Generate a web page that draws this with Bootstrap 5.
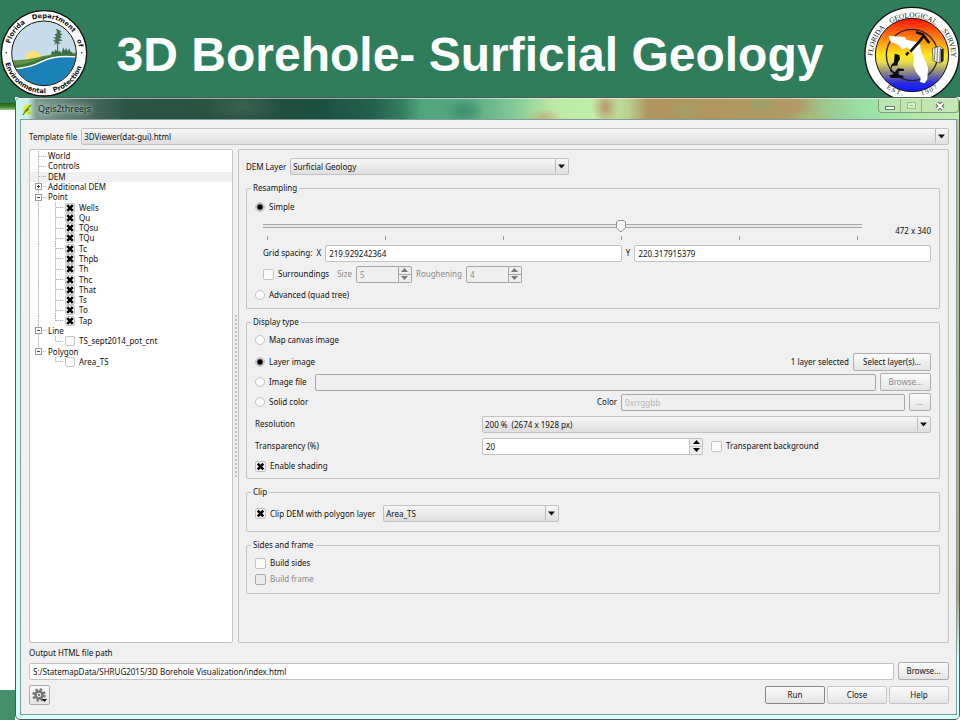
<!DOCTYPE html>
<html lang="en">
<head>
<meta charset="utf-8">
<meta name="viewport" content="width=device-width, initial-scale=1">
<title>3D Borehole- Surficial Geology</title>
<link href="https://cdn.jsdelivr.net/npm/bootstrap@5.3.0/dist/css/bootstrap.min.css" rel="stylesheet">
<style>
  :root {
    --slide-green: #2f7d5b;
    --face: #f0f0f0;
    --line: #c2c2c2;
    --arrow: url("data:image/svg+xml,%3Csvg xmlns='http://www.w3.org/2000/svg' width='13' height='14'%3E%3Cpath d='M.5 0v14' stroke='%23bbb'/%3E%3Cpath d='M3 5.5h7L6.500 9.500z' fill='%23111'/%3E%3C/svg%3E");
    --cross: url("data:image/svg+xml,%3Csvg xmlns='http://www.w3.org/2000/svg' viewBox='0 0 10 10'%3E%3Cpath d='M2.500 2.400L7.500 7.600M7.500 2.400L2.500 7.600' stroke='%23000' stroke-width='2.300'/%3E%3C/svg%3E");
  }
  body { font: 8px/12px "Noto Sans", "Open Sans", sans-serif; color: #111; background: #fff; }
  .slide-head { background: var(--slide-green); }
  .slide-head h1 { font: bold 48px/56px "Liberation Sans", Arial, sans-serif; color: #fff; padding: 27px 12px 0 0; }
  .slide-head svg { display: block; flex: none; }

  .edge { width: 15px; }
  .edge-top { height: 6px; background: var(--slide-green); }
  .edge-bar { height: 7px; background: linear-gradient(#2c5a1a, #3f8f27 60%, #a9c9a0); }
  .edge-foot { height: 30px; background: #458e6c; }

  .win { border: 1px solid #4b5a58; border-radius: 5px; background: linear-gradient(#d2f5f0, #d8ffff); min-width: 0; overflow: hidden; }
  .win-title {
    height: 21px; border-top: 1px solid #ffffff88;
    background:
      radial-gradient(ellipse 40px 18px at 24% 8px, #4f6f6388, transparent),
      radial-gradient(ellipse 20px 12px at 47.500% 12px, #3a8c6d, transparent),
      radial-gradient(ellipse 18px 8px at 56% 18px, #c3b184, transparent),
      radial-gradient(ellipse 14px 18px at 62.500% 8px, #b8996a, transparent),
      radial-gradient(ellipse 16px 10px at 71% 12px, #a3a06c, transparent),
      radial-gradient(ellipse 16px 8px at 79% 5px, #93a46c, transparent),
      radial-gradient(ellipse 20px 9px at 84% 18px, #a6ba7c, transparent),
      linear-gradient(90deg, #cff5ee 0, #c7eee4 12px, #7c9c90 20px, #4a6b5e 70px, #2d5546 110px, #29503f 24%, #1c5041 32%, #24614e 38%, #337f61 41%, #50a67c 43%, #56a880 48%, #86cb96 53%, #bdeaa6 57%, #c2eeac 62%, #b9cf90 65%, #b1945f 67%, #b0975f 75%, #b09a68 83%, #9cc78e 85.500%, #9ae0a6 90%, #b5e8ab 96%, #c3eab5);
  }
  .win-name { font: 9px/12px "Open Sans", "Noto Sans", sans-serif; color: #10241f; text-shadow: 0 0 4px #b9d2c8, 0 0 6px #b9d2c8, 0 0 8px #b9d2c8; }
  .win-ctl { height: 14px; border: 1px solid #7f9f7b; border-top: 0; border-radius: 0 0 4px 4px; background: #c6e6b4aa; }
  .win-ctl button { border: 0; padding: 0; background: none; line-height: 0; width: 21px; }
  .win-ctl button + button { border-left: 1px solid #94b08e; }
  .win-ctl button:last-child { width: 37px; }

  .frame { padding: 0 2px 4px 4px; background: linear-gradient(#b9c49a, #b5a583 80%, #d8ffff 90%) right top / 2px 100% no-repeat; }
  .client { background: var(--face); border: 1px solid #7f9b9b; padding: 8px 7px 9px 8px; }

  .ctl { display: block; min-width: 0; height: 17px; font: inherit; line-height: 13px; color: #111; padding: 1px 3px; border: 1px solid var(--line); border-radius: 2px; background-color: #fff; }
  select.ctl { appearance: none; background: var(--arrow) right top / 13px 14px no-repeat, linear-gradient(#f7f7f7, #dedede); padding-left: 2px; }
  .ctl:disabled { background-color: #efefef; border-color: #a6a6a6; color: #8a8a8a; opacity: 1; }
  .ctl::placeholder { color: #b4b4b4; }
  input[type=number].ctl { appearance: textfield; border-radius: 2px 0 0 2px; }
  input::-webkit-inner-spin-button { display: none; }
  .spin-keys { width: 13px; border: 1px solid var(--line); border-left: 0; border-radius: 0 2px 2px 0; background: #ededed; }
  .spin-keys button { flex: 1; border: 0; padding: 0; background: none; line-height: 0; color: #000; }
  .spin-keys button + button { border-top: 1px solid var(--line); }
  .spin-off .spin-keys { border-color: #a6a6a6; }
  .spin-off .spin-keys button { color: #777; border-color: #a6a6a6; }
  .spin-s { width: 56px; }
  .spin-l { width: 221px; }

  .push { font: inherit; line-height: 14px; color: #111; height: 18px; padding: 1px 5px; border: 1px solid #adadad; border-radius: 2px; background: linear-gradient(#fbfbfb, #e4e4e4); white-space: nowrap; }
  .push:disabled { color: #8c8c8c; }
  .push-w { width: 60px; }
  .push-m { width: 51px; }
  .push-s { width: 22px; }
  .push-x { width: 78px; }
  .push-main { border-color: #868686; }
  .push-soft { border-color: #c6c6c6; }

  .tick { appearance: none; flex: none; width: 11px; height: 11px; margin: 0; border: 1px solid #c4c4c4; border-radius: 2px; background: #fbfbfb; }
  .tick:checked { background: var(--cross) center / 11px 11px no-repeat #f2f2f2; }
  .tick:disabled { border-color: #a8a8a8; background-color: #ececec; }
  .dot { appearance: none; flex: none; width: 10px; height: 10px; margin: 0; border: 1px solid #c2c2c2; border-radius: 50%; background: #fcfcfc; }
  .dot:checked { background: radial-gradient(circle, #000 2px, #f4f4f4 4px); }
  .off { color: #8c8c8c; }

  .pane { border: 1px solid var(--line); border-radius: 2px; }
  .side { width: 204px; background: #fff; }
  .grip { width: 5px; background: radial-gradient(circle, #bcbcbc 1px, transparent 1px) center / 4px 4px repeat-y; background-clip: content-box; padding: 164px 0; }
  .detail { padding: 8px 8px 0 7px; gap: 7px; }

  .tree { display: grid; grid-auto-rows: 1fr; height: 217px; line-height: 10px; padding-top: 1px; }
  .tree li { display: flex; align-items: center; }
  .tree label { padding-left: 4px; }
  .tree .sel { background: #f0f0f0; }
  .g1 { flex: none; align-self: stretch; width: 18px; display: flex; align-items: center; padding-left: 5px;
    background: repeating-linear-gradient(#b5b5b5 0 1px, #e8e8e8 1px 2px) 8px 0 / 1px 100% no-repeat, repeating-linear-gradient(90deg, #b5b5b5 0 1px, #e8e8e8 1px 2px) 9px 50% / 7px 1px no-repeat; }
  .g1.pass { background-size: 1px 100%, 0 0; }
  .g1.none { background: none; }
  .g2 { flex: none; align-self: stretch; width: 17px;
    background: repeating-linear-gradient(#b5b5b5 0 1px, #e8e8e8 1px 2px) 7px 0 / 1px 100% no-repeat, repeating-linear-gradient(90deg, #b5b5b5 0 1px, #e8e8e8 1px 2px) 8px 50% / 7px 1px no-repeat; }
  .g2.end, .g1.end { background-size: 1px 50%, 7px 1px; }
  .tree .tick { width: 10px; height: 10px; }
  .fold { width: 7px; height: 7px; border: 1px solid #9a9a9a; padding: 0; line-height: 0; background: linear-gradient(#444, #444) center / 3px 1px no-repeat #fff; }
  .fold.shut { background: linear-gradient(#444, #444) center / 3px 1px no-repeat, linear-gradient(#444, #444) center / 1px 3px no-repeat, #fff; }

  .group { border: 1px solid var(--line); border-radius: 2px; padding: 0 8px 2px 8px; }
  .group legend { float: none; width: auto; font: inherit; line-height: 12px; margin: 0 0 0 -4px; padding: 0 2px; }
  .group label, .group span { white-space: nowrap; }
  .line { display: flex; align-items: center; gap: 4px; min-height: 20px; }
  .line-lg { min-height: 22px; }
  .line-md { min-height: 24px; }
  .line-xl { min-height: 26px; }
  .line-sm { min-height: 16px; }
  .line-clip { min-height: 31px; }
  .inset { padding-left: 8px; }
  .col-name { width: 223px; flex: none; }
  .readout { width: 65px; }
  .hex { width: 42%; }
  .pair { display: flex; align-items: center; gap: 4px; }
  .dem-sel { width: 279px; }
  .clip-sel { width: 176px; }

  .slide-range { appearance: none; display: block; width: 100%; height: 12px; margin: 0; background: linear-gradient(#a8a8a8 0 1px, #e8e8e8 1px 3px, #a8a8a8 3px 4px) 0 50% / 100% 4px no-repeat; }
  .slide-range::-webkit-slider-thumb { appearance: none; width: 10px; height: 12px; background: url("data:image/svg+xml,%3Csvg xmlns='http://www.w3.org/2000/svg' viewBox='0 0 10 12'%3E%3Cpath d='M2 .5h6l1.500 1.500v5.500L6 11.500H4L.5 7.500V2z' fill='%23f6f6f6' stroke='%23929292'/%3E%3C/svg%3E") center / 10px 12px no-repeat; }
  .marks { padding: 4px 4px 2px; }
  .marks i { width: 1px; height: 4px; background: #999; }
  .path-row { margin-top: 3px; }
  .key-row { margin-top: 5px; }
  .keys { gap: 2px; }
  .gear { width: 21px; height: 20px; padding: 1px; line-height: 0; }
</style>
<script src="https://cdn.jsdelivr.net/npm/bootstrap@5.3.0/dist/js/bootstrap.bundle.min.js"></script>
</head>
<body class="d-flex flex-column min-vh-100">

<header class="slide-head d-flex justify-content-between">
  <svg width="88" height="97" viewBox="0 0 264 291" role="img" aria-label="Florida Department of Environmental Protection">
    <defs>
      <clipPath id="sealClip"><circle cx="132" cy="160" r="96"/></clipPath>
      <path id="sealTop" d="M26 160a106 106 0 0 1 212 0"/>
      <path id="sealLow" d="M12 160a120 120 0 0 0 240 0"/>
    </defs>
    <circle cx="132" cy="160" r="128" fill="#fff" stroke="#111" stroke-width="4"/>
    <g clip-path="url(#sealClip)">
      <path fill="#c6dcea" d="M30 60h210v200H30z"/>
      <circle cx="100" cy="178" r="26" fill="#ffdf7e"/>
      <path d="M30 180Q70 182 105 174Q150 160 235 158V185L30 210z" fill="#5d9146"/>
      <path d="M30 196Q90 195 130 172Q170 160 235 164L150 190L30 212z" fill="#3f7535"/>
      <path d="M30 207Q85 206 125 185Q165 163 240 172V265H30z" fill="#1a82b7" stroke="#fff" stroke-width="4"/>
      <path d="M173 162V88" stroke="#3c5e4c" stroke-width="3"/>
      <path d="M168 86l8 4 8 4-4 4 8 6-8 3 6 6-9 2 11 7-13 2 8 8-11-2-11 4 6-8-9-3 10-5-8-5 9-3-5-7 8-3z" fill="#466f58"/>
      <path d="M152 164l5-12 5 5 5-9 6 9 6-5 5 8 6-18 4 10 5-9 3 11 7-9 2 10 6 1v8z" fill="#416c49"/>
    </g>
    <circle cx="132" cy="160" r="97" fill="none" stroke="#111" stroke-width="3"/>
    <g font-family="DejaVu Sans" font-weight="bold" font-size="20" fill="#111">
      <text><textPath href="#sealTop" startOffset="29">Florida</textPath></text>
      <text><textPath href="#sealTop" startOffset="131">Department</textPath></text>
      <text><textPath href="#sealTop" startOffset="292">of</textPath></text>
      <text><textPath href="#sealLow" startOffset="30">Environmental</textPath></text>
      <text><textPath href="#sealLow" startOffset="218">Protection</textPath></text>
    </g>
    <circle cx="19" cy="158" r="2"/><circle cx="245" cy="158" r="2"/>
  </svg>
  <h1 class="m-0 text-center text-nowrap">3D Borehole- Surficial Geology</h1>
  <svg width="96" height="97" viewBox="432 0 288 291" role="img" aria-label="Florida Geological Survey, Est. 1907">
    <defs>
      <linearGradient id="dusk" x1="0" y1="0" x2="0" y2="1">
        <stop offset="0" stop-color="#ff1208"/><stop offset=".25" stop-color="#ff7a10"/><stop offset=".5" stop-color="#ffe818"/><stop offset=".6" stop-color="#e8dc50"/><stop offset=".75" stop-color="#85808a"/><stop offset=".88" stop-color="#2a2ee0"/><stop offset="1" stop-color="#0a18ff"/>
      </linearGradient>
      <path id="fgsTop" d="M458 170a118 118 0 0 1 236 0"/>
      <path id="fgsLow" d="M449 163a127 127 0 0 0 254 0"/>
    </defs>
    <circle cx="576" cy="163" r="141" fill="#fff" stroke="#111" stroke-width="4"/>
    <circle cx="576" cy="165" r="110" fill="url(#dusk)" stroke="#111" stroke-width="3"/>
    <circle cx="576" cy="165" r="77" fill="none" stroke="#222" stroke-width="4"/>
    <path d="M506 107l48 4 6 9 30 6 10 8 4 22 12 26 8 22-2 34-8 12-14-4 2-12-14-18-8-20 2-28-8-14-12-12-14 6-14-14-22-8z" fill="#fff"/>
    <path d="M588 97l20 6 20 26M611 107l-10 14-30 34M566 157l-8 8" fill="none" stroke="#111" stroke-width="8"/>
    <path d="M524 161l14 4 2 12-6 10-2 10h-14l-6 12 12 8 10-12 18 2v5l-16 2v10l14 4v6h-38l-4-8 14-4-12-10 4-18 8-8z" fill="#0c0c0c"/>
    <path d="M637 145l22-6 12 8-2 36-10 6-20-7z" fill="#f4f4f4" stroke="#333" stroke-width="2"/>
    <path d="M645 144l-2 38M653 142l-2 42M661 144l-2 44" stroke="#444" stroke-width="2"/><path d="M662 148l8-2v36l-8 6z" fill="#222"/>
    <g font-family="Liberation Serif" font-size="22" fill="#111">
      <text><textPath href="#fgsTop" startOffset="2">FLORIDA</textPath></text>
      <text><textPath href="#fgsTop" startOffset="118">GEOLOGICAL</textPath></text>
      <text><textPath href="#fgsTop" startOffset="287">SURVEY</textPath></text>
      <text font-size="20"><textPath href="#fgsLow" startOffset="116">E S T .</textPath></text>
      <text font-size="20"><textPath href="#fgsLow" startOffset="228">1 9 0 7</textPath></text>
    </g>
  </svg>
</header>

<div class="d-flex flex-fill">
  <div class="edge d-flex flex-column flex-shrink-0">
    <div class="edge-top"></div><div class="edge-bar"></div><div class="flex-fill"></div><div class="edge-foot"></div>
  </div>

  <main class="win d-flex flex-column flex-fill">
    <div class="win-title d-flex align-items-start">
      <svg class="ms-1 mt-1 me-1" width="14" height="14" viewBox="0 0 14 14" aria-hidden="true"><path d="M3 9Q2 4 6 2l3-1 2 2-1 5-4 4z" fill="#e4ec3c"/><path d="M3 12L6 7l5-5M5 9l4-3" stroke="#4c8a2c" stroke-width="1.200" fill="none"/><path d="M8 11l3-2" stroke="#c3cf22" stroke-width="2"/></svg>
      <span class="win-name flex-fill align-self-center">Qgis2threejs</span>
      <div class="win-ctl d-flex">
        <button type="button" aria-label="Minimize"><svg width="12" height="10"><rect x="1.500" y="5.500" width="9" height="3" fill="#fff" stroke="#667a68"/></svg></button>
        <button type="button" aria-label="Maximize"><svg width="12" height="10"><rect x="2.500" y="1.500" width="8" height="6" fill="#d8efcb" stroke="#9fb896"/><path d="M5 4.500h3" stroke="#9fb896"/></svg></button>
        <button type="button" aria-label="Close window"><svg width="12" height="10"><path d="M3 2l6 6M9 2L3 8" stroke="#596b5d" stroke-width="4"/><path d="M3 2l6 6M9 2L3 8" stroke="#fff" stroke-width="2"/></svg></button>
      </div>
    </div>

    <div class="frame d-flex flex-column flex-fill">
      <form class="client d-flex flex-column flex-fill">
        <div class="d-flex align-items-center mb-1">
          <label for="tpl" class="me-1">Template file</label>
          <select id="tpl" class="ctl flex-fill"><option>3DViewer(dat-gui).html</option></select>
        </div>

        <div class="d-flex flex-fill">
          <div class="pane side flex-shrink-0">
            <ul class="tree list-unstyled m-0">
              <li><span class="g1"></span>World</li>
              <li><span class="g1"></span>Controls</li>
              <li class="sel"><span class="g1"></span>DEM</li>
              <li><span class="g1"><button type="button" class="fold shut" aria-label="Expand Additional DEM"></button></span>Additional DEM</li>
              <li><span class="g1"><button type="button" class="fold" aria-label="Collapse Point"></button></span>Point</li>
              <li><span class="g1 pass"></span><span class="g2"></span><input class="tick" type="checkbox" id="l1" checked><label for="l1">Wells</label></li>
              <li><span class="g1 pass"></span><span class="g2"></span><input class="tick" type="checkbox" id="l2" checked><label for="l2">Qu</label></li>
              <li><span class="g1 pass"></span><span class="g2"></span><input class="tick" type="checkbox" id="l3" checked><label for="l3">TQsu</label></li>
              <li><span class="g1 pass"></span><span class="g2"></span><input class="tick" type="checkbox" id="l4" checked><label for="l4">TQu</label></li>
              <li><span class="g1 pass"></span><span class="g2"></span><input class="tick" type="checkbox" id="l5" checked><label for="l5">Tc</label></li>
              <li><span class="g1 pass"></span><span class="g2"></span><input class="tick" type="checkbox" id="l6" checked><label for="l6">Thpb</label></li>
              <li><span class="g1 pass"></span><span class="g2"></span><input class="tick" type="checkbox" id="l7" checked><label for="l7">Th</label></li>
              <li><span class="g1 pass"></span><span class="g2"></span><input class="tick" type="checkbox" id="l8" checked><label for="l8">Thc</label></li>
              <li><span class="g1 pass"></span><span class="g2"></span><input class="tick" type="checkbox" id="l9" checked><label for="l9">That</label></li>
              <li><span class="g1 pass"></span><span class="g2"></span><input class="tick" type="checkbox" id="l10" checked><label for="l10">Ts</label></li>
              <li><span class="g1 pass"></span><span class="g2"></span><input class="tick" type="checkbox" id="l11" checked><label for="l11">To</label></li>
              <li><span class="g1 pass"></span><span class="g2 end"></span><input class="tick" type="checkbox" id="l12" checked><label for="l12">Tap</label></li>
              <li><span class="g1"><button type="button" class="fold" aria-label="Collapse Line"></button></span>Line</li>
              <li><span class="g1 pass"></span><span class="g2 end"></span><input class="tick" type="checkbox" id="l13"><label for="l13">TS_sept2014_pot_cnt</label></li>
              <li><span class="g1 end"><button type="button" class="fold" aria-label="Collapse Polygon"></button></span>Polygon</li>
              <li><span class="g1 none"></span><span class="g2 end"></span><input class="tick" type="checkbox" id="l14"><label for="l14">Area_TS</label></li>
            </ul>
          </div>
          <div class="grip flex-shrink-0"></div>

          <div class="pane detail d-flex flex-column flex-fill">
            <div class="d-flex align-items-center">
              <label for="dem" class="me-1">DEM Layer</label>
              <select id="dem" class="ctl dem-sel"><option>Surficial Geology</option></select>
            </div>

            <fieldset class="group">
              <legend>Resampling</legend>
              <div class="line line-xl"><input class="dot" type="radio" name="res" id="simple" checked><label for="simple">Simple</label></div>
              <div class="line line-lg inset">
                <div class="flex-fill">
                  <input class="slide-range" type="range" min="0" max="5" value="3" aria-label="Resampling level">
                  <div class="marks d-flex justify-content-between"><i></i><i></i><i></i><i></i><i></i><i></i></div>
                </div>
                <output class="readout text-end">472 x 340</output>
              </div>
              <div class="line line-lg inset">
                <label for="gx">Grid spacing:&nbsp; X</label><input id="gx" class="ctl flex-fill w-25" type="text" value="219.929242364">
                <label for="gy">Y</label><input id="gy" class="ctl flex-fill w-25" type="text" value="220.317915379">
              </div>
              <div class="line inset">
                <input class="tick" type="checkbox" id="sur"><label for="sur" class="me-1">Surroundings</label>
                <label for="size" class="off">Size</label>
                <div class="d-flex spin-s spin-off"><input id="size" class="ctl flex-fill w-50" type="number" value="5" disabled><div class="spin-keys d-flex flex-column"><button type="button" disabled aria-label="Size up"><svg width="7" height="4"><path d="M0 4h7L3.500 0z" fill="currentColor"/></svg></button><button type="button" disabled aria-label="Size down"><svg width="7" height="4"><path d="M0 0h7L3.500 4z" fill="currentColor"/></svg></button></div></div>
                <label for="rough" class="off">Roughening</label>
                <div class="d-flex spin-s spin-off"><input id="rough" class="ctl flex-fill w-50" type="number" value="4" disabled><div class="spin-keys d-flex flex-column"><button type="button" disabled aria-label="Roughening up"><svg width="7" height="4"><path d="M0 4h7L3.500 0z" fill="currentColor"/></svg></button><button type="button" disabled aria-label="Roughening down"><svg width="7" height="4"><path d="M0 0h7L3.500 4z" fill="currentColor"/></svg></button></div></div>
              </div>
              <div class="line line-lg"><input class="dot" type="radio" name="res" id="adv"><label for="adv">Advanced (quad tree)</label></div>
            </fieldset>

            <fieldset class="group">
              <legend>Display type</legend>
              <div class="line line-md"><input class="dot" type="radio" name="disp" id="canvasImg"><label for="canvasImg">Map canvas image</label></div>
              <div class="line"><input class="dot" type="radio" name="disp" id="layerImg" checked><label for="layerImg">Layer image</label><span class="ms-auto">1 layer selected</span><button type="button" class="push push-x">Select layer(s)...</button></div>
              <div class="line"><input class="dot" type="radio" name="disp" id="fileImg"><label for="fileImg" class="me-1">Image file</label><input class="ctl flex-fill" type="text" disabled aria-label="Image file path"><button type="button" class="push push-m" disabled>Browse...</button></div>
              <div class="line"><input class="dot" type="radio" name="disp" id="solid"><label for="solid">Solid color</label><label for="hex" class="ms-auto">Color</label><input id="hex" class="ctl hex" type="text" placeholder="0xrrggbb" disabled><button type="button" class="push push-s" disabled>...</button></div>
              <div class="line line-md"><label for="reso" class="col-name">Resolution</label><select id="reso" class="ctl flex-fill"><option>200 %&nbsp; (2674 x 1928 px)</option></select></div>
              <div class="line"><label for="trans" class="col-name">Transparency (%)</label>
                <div class="d-flex spin-l"><input id="trans" class="ctl flex-fill w-50" type="number" value="20"><div class="spin-keys d-flex flex-column"><button type="button" aria-label="Transparency up"><svg width="7" height="4"><path d="M0 4h7L3.500 0z" fill="currentColor"/></svg></button><button type="button" aria-label="Transparency down"><svg width="7" height="4"><path d="M0 0h7L3.500 4z" fill="currentColor"/></svg></button></div></div>
                <span class="pair ms-1"><input class="tick" type="checkbox" id="tbg"><label for="tbg">Transparent background</label></span></div>
              <div class="line"><input class="tick" type="checkbox" id="shade" checked><label for="shade">Enable shading</label></div>
            </fieldset>

            <fieldset class="group">
              <legend>Clip</legend>
              <div class="line line-clip"><input class="tick" type="checkbox" id="clip" checked><label for="clip" class="me-1">Clip DEM with polygon layer</label><select class="ctl clip-sel" aria-label="Polygon layer"><option>Area_TS</option></select></div>
            </fieldset>

            <fieldset class="group">
              <legend>Sides and frame</legend>
              <div class="line line-sm mt-1"><input class="tick" type="checkbox" id="sides"><label for="sides">Build sides</label></div>
              <div class="line line-sm mb-1"><input class="tick" type="checkbox" id="framec" disabled><label for="framec" class="off">Build frame</label></div>
            </fieldset>
          </div>
        </div>

        <label for="out" class="mt-1">Output HTML file path</label>
        <div class="path-row d-flex align-items-center gap-1">
          <input id="out" class="ctl flex-fill" type="text" value="S:/StatemapData/SHRUG2015/3D Borehole Visualization/index.html">
          <button type="button" class="push push-m">Browse...</button>
        </div>
        <div class="key-row d-flex align-items-center">
          <button type="button" class="push gear me-auto" aria-label="Settings"><svg width="17" height="16" viewBox="0 0 17 16"><circle cx="8" cy="8" r="5.500" fill="none" stroke="#777" stroke-width="2.500" stroke-dasharray="2.300 2.020"/><circle cx="8" cy="8" r="3.500" fill="none" stroke="#777" stroke-width="2.600"/><circle cx="8" cy="8" r="1.200" fill="#777"/><path d="M11 12h5l-2.500 3z" fill="#000"/></svg></button>
          <div class="d-flex keys">
            <button type="button" class="push push-w push-main">Run</button>
            <button type="button" class="push push-w push-soft">Close</button>
            <button type="button" class="push push-w push-soft">Help</button>
          </div>
        </div>
      </form>
    </div>
  </main>
</div>
</body>
</html>
